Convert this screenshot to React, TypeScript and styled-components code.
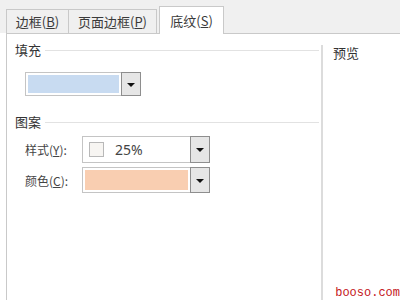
import React from 'react'
import styled, { createGlobalStyle } from 'styled-components'

const GlobalStyle = createGlobalStyle`
    html, body {
        margin: 0;
        padding: 0;
        background: #fff;
    }
    body {
        width: 400px;
        height: 300px;
        overflow: hidden;
        font-family: "Noto Sans CJK SC", "Noto Sans", sans-serif;
        color: #333;
    }
`

const StyleDialog = styled.div`
    width: 400px;
    height: 300px;
    display: flex;
    flex-direction: column;
    position: relative;
`

const StyleTabBar = styled.div`
    height: 33px;
    background-color: #f0f0f0;
    display: flex;
    align-items: flex-end;
    padding-left: 6px;
`

const StyleTab = styled.div<{ $width: number; $active?: boolean }>`
    box-sizing: border-box;
    width: ${p => p.$width}px;
    height: ${p => (p.$active ? 28 : 24)}px;
    margin-left: ${p => (p.$active ? 2 : 0)}px;
    margin-bottom: ${p => (p.$active ? -1 : 0)}px;
    border: 1px solid #c9c9c9;
    border-bottom: none;
    border-left: ${p => (p.$active ? '1px solid #c9c9c9' : 'none')};
    background-color: ${p => (p.$active ? '#fff' : '#f0f0f0')};
    display: flex;
    align-items: center;
    justify-content: center;
    font-size: 13px;
    color: #3a3a3a;
    position: relative;
    z-index: 1;
    &:first-child {
        border-left: 1px solid #c9c9c9;
    }
`

const StylePanel = styled.div`
    flex: 1;
    margin-left: 6px;
    border-top: 1px solid #c9c9c9;
    border-left: 1px solid #c9c9c9;
    display: flex;
`

const StyleLeftColumn = styled.div`
    width: 314px;
    padding: 7px 0 0 8px;
    box-sizing: border-box;
    display: flex;
    flex-direction: column;
`

const StyleDivider = styled.div`
    width: 2px;
    margin-top: 11px;
    background-color: #dcdcdc;
`

const StyleRightColumn = styled.div`
    flex: 1;
    padding: 11px 0 0 10px;
`

const StyleGroupHeader = styled.div<{ $top?: number }>`
    display: flex;
    align-items: center;
    height: 16px;
    margin-top: ${p => p.$top ?? 0}px;
    font-size: 13px;
    color: #333;
`

const StyleGroupLine = styled.div`
    flex: 1;
    height: 1px;
    margin: 3px 2px 0 4px;
    background-color: #e2e2e2;
`

const StyleFieldRow = styled.div<{ $top: number }>`
    display: flex;
    align-items: center;
    margin-top: ${p => p.$top}px;
    padding-left: 10px;
`

const StyleFieldLabel = styled.div`
    width: 57px;
    font-size: 12px;
    color: #444;
`

const StyleDropdown = styled.div<{ $width: number; $height: number }>`
    display: flex;
    width: ${p => p.$width}px;
    height: ${p => p.$height}px;
`

const StyleDropdownField = styled.div`
    flex: 1;
    box-sizing: border-box;
    border: 1px solid #c4c4c4;
    border-right: none;
    background-color: #fff;
    padding: 2px;
    display: flex;
    align-items: center;
`

const StyleSwatch = styled.div<{ $color: string }>`
    flex: 1;
    align-self: stretch;
    background-color: ${p => p.$color};
`

const StylePatternBox = styled.div`
    width: 13px;
    height: 13px;
    margin-left: 4px;
    border: 1px solid #b8b8b8;
    background-color: #f7f5f2;
`

const StylePatternText = styled.span`
    margin-left: 11px;
    font-family: "Noto Sans", sans-serif;
    font-size: 14px;
    color: #444;
`

const StyleDropdownButton = styled.div`
    width: 20px;
    box-sizing: border-box;
    border: 1px solid #8e8e8e;
    background-color: #e6e6e6;
    display: flex;
    align-items: center;
    justify-content: center;
    &::after {
        content: '';
        border-left: 4px solid transparent;
        border-right: 4px solid transparent;
        border-top: 4px solid #111;
        margin-top: 1px;
    }
`

const StylePreviewLabel = styled.div`
    font-size: 13px;
    color: #333;
    line-height: 16px;
`

const StyleWatermark = styled.div`
    position: absolute;
    right: 0;
    bottom: 0;
    font-family: "Liberation Mono", monospace;
    font-size: 12px;
    color: #c4161c;
    background-color: #fff;
`

export default function App() {
    return (
        <StyleDialog>
            <GlobalStyle />
            <StyleTabBar>
                <StyleTab $width={63}>边框(<u>B</u>)</StyleTab>
                <StyleTab $width={88}>页面边框(<u>P</u>)</StyleTab>
                <StyleTab $width={65} $active>底纹(<u>S</u>)</StyleTab>
            </StyleTabBar>
            <StylePanel>
                <StyleLeftColumn>
                    <StyleGroupHeader>
                        填充
                        <StyleGroupLine />
                    </StyleGroupHeader>
                    <StyleFieldRow $top={15}>
                        <StyleDropdown $width={116} $height={24}>
                            <StyleDropdownField>
                                <StyleSwatch $color="#c8dbf1" />
                            </StyleDropdownField>
                            <StyleDropdownButton />
                        </StyleDropdown>
                    </StyleFieldRow>
                    <StyleGroupHeader $top={17}>
                        图案
                        <StyleGroupLine />
                    </StyleGroupHeader>
                    <StyleFieldRow $top={7}>
                        <StyleFieldLabel>样式(<u>Y</u>):</StyleFieldLabel>
                        <StyleDropdown $width={128} $height={27}>
                            <StyleDropdownField>
                                <StylePatternBox />
                                <StylePatternText>25%</StylePatternText>
                            </StyleDropdownField>
                            <StyleDropdownButton />
                        </StyleDropdown>
                    </StyleFieldRow>
                    <StyleFieldRow $top={4}>
                        <StyleFieldLabel>颜色(<u>C</u>):</StyleFieldLabel>
                        <StyleDropdown $width={128} $height={26}>
                            <StyleDropdownField>
                                <StyleSwatch $color="#f9ceb1" />
                            </StyleDropdownField>
                            <StyleDropdownButton />
                        </StyleDropdown>
                    </StyleFieldRow>
                </StyleLeftColumn>
                <StyleDivider />
                <StyleRightColumn>
                    <StylePreviewLabel>预览</StylePreviewLabel>
                </StyleRightColumn>
            </StylePanel>
            <StyleWatermark>booso.com</StyleWatermark>
        </StyleDialog>
    )
}
